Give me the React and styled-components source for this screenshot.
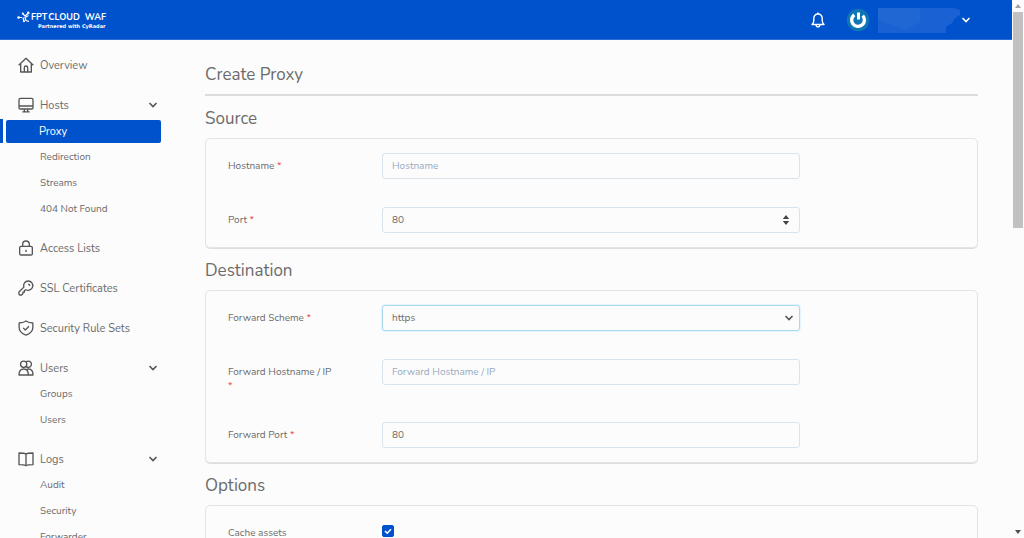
import React, { useState } from 'react'
import styled, { createGlobalStyle } from 'styled-components'

const menu = [
  { label: 'Overview', icon: 'home' },
  { label: 'Hosts', icon: 'monitor', children: ['Proxy', 'Redirection', 'Streams', '404 Not Found'] },
  { label: 'Access Lists', icon: 'lock' },
  { label: 'SSL Certificates', icon: 'key' },
  { label: 'Security Rule Sets', icon: 'shield' },
  { label: 'Users', icon: 'users', children: ['Groups', 'Users'] },
  { label: 'Logs', icon: 'book', children: ['Audit', 'Security', 'Forwarder'] },
]

const icons = {
  home: (
    <>
      <path d="M1 12.500 12 2l11 10.500" />
      <path d="M4 10v12.500h16V10" />
      <path d="M9.500 22.500V16a2.500 2.500 0 0 1 5 0v6.500" />
    </>
  ),
  monitor: (
    <>
      <rect x="1.500" y="2" width="21" height="16" rx="2" />
      <path d="M1.500 13.500h21M9.500 18v4M14.500 18v4M6.500 22.300h11" />
    </>
  ),
  lock: (
    <>
      <rect x="2.500" y="9.500" width="19" height="13" rx="2" />
      <path d="M7 9.500V6.500a5 5 0 0 1 10 0v3M12 14.500v3.500" />
    </>
  ),
  key: (
    <>
      <path d="M15.500 1.500a7 7 0 0 0-6.700 9.200L1.800 17.700a1.500 1.500 0 0 0-.4 1V21a1.500 1.500 0 0 0 1.500 1.500h2.400l2-2v-2.300h2.300v-2.300l2.200-1.300a7 7 0 1 0 3.700-13.100z" />
      <path d="M15.200 6.200c1.500.2 2.500 1.200 2.700 2.700" />
    </>
  ),
  shield: (
    <>
      <path d="M12 1.500c3 2 6.500 3 10.300 3v6.500c0 5.500-4 9.500-10.300 11.800C5.700 20.500 1.700 16.500 1.700 11V4.500C5.500 4.500 9 3.500 12 1.500z" />
      <path d="m7.800 11.800 3.200 3.200 5.500-5.500" />
    </>
  ),
  users: (
    <>
      <circle cx="8.500" cy="6.500" r="4.700" />
      <path d="M12 3.300a4.700 4.700 0 1 1 0 6.400" />
      <path d="M1.500 22.500c0-6 2.500-9 7-9s7 3 7 9z" />
      <path d="M12.500 14.600c1-.7 2-1.100 3.300-1.100 4.400 0 6.700 3 6.700 9h-7" />
    </>
  ),
  book: (
    <>
      <path d="M12 4.500C10.500 3.300 8 3 1.500 3v17.500c6.500 0 9 .3 10.500 1.500 1.500-1.200 4-1.500 10.500-1.500V3C16 3 13.500 3.300 12 4.500z" />
      <path d="M12 4.500V22" />
    </>
  ),
}

const MenuIcon = ({ name }) => (
  <svg width="16" height="16" viewBox="0 0 24 24" fill="none" stroke="#555" strokeWidth="2" strokeLinejoin="round" aria-hidden="true">
    {icons[name]}
  </svg>
)

const Chevron = ({ color = '#555' }) => (
  <svg width="10" height="10" viewBox="0 0 10 10" fill="none" stroke={color} strokeWidth="1.600" aria-hidden="true">
    <path d="M1.500 3 5 6.500 8.500 3" />
  </svg>
)

const Header = () => (
  <TopBar>
    <Logo href="#">
      <svg width="14" height="12" viewBox="0 0 14 12" fill="#fff" aria-hidden="true">
        <path d="M1.500 6.500H5M6 3 8 5l3.500-3M11.500 4.500 8 6.500 9 9.500l3 1M6 6.500l1 4" fill="none" stroke="#fff" strokeWidth="1.200" />
        <circle cx="1.600" cy="6.500" r="1.300" />
        <circle cx="5.800" cy="2.600" r="1" />
        <circle cx="11.300" cy="1.900" r="1.300" />
        <circle cx="7" cy="10.300" r="1" />
      </svg>
      <LogoText>
        <LogoName>
          <LogoBrand>
            <span>FPT</span> <span>CLOUD</span>
          </LogoBrand>
          <span>WAF</span>
        </LogoName>
        <LogoNote>Partnered with CyRadar</LogoNote>
      </LogoText>
    </Logo>
    <Account>
      <BellButton type="button" aria-label="Notifications">
        <svg width="14" height="16" viewBox="0 0 14 16" fill="none" stroke="#fff" strokeWidth="1.400" strokeLinejoin="round">
          <path d="M1 12.500h12c-1.300-1.200-1.800-2.300-1.800-4V6.300C11.200 3.700 9.500 2 7 2S2.800 3.700 2.800 6.300v2.200c0 1.700-.5 2.800-1.800 4z" />
          <path d="M5 13c.2 1.300 1 2 2 2s1.800-.7 2-2M7 .5V2" />
        </svg>
      </BellButton>
      <UserButton type="button" aria-label="Account menu">
        <svg width="24" height="24" viewBox="0 0 24 24" fill="none" aria-hidden="true">
          <circle cx="12" cy="12" r="11.300" fill="#0f75b5" />
          <path d="M8.300 6.800a6.400 6.400 0 1 0 8.400.8" stroke="#fff" strokeWidth="3.400" />
          <path d="M12.500 4.500v7" stroke="#fff" strokeWidth="3" />
        </svg>
        <svg width="83" height="26" viewBox="0 0 83 26" aria-hidden="true">
          <path d="M0 1h76l6 2v5l-5 3-3 5-6 4v6H0z" fill="#1a62d3" />
          <path d="M0 1h42v14l-14 8L0 13z" fill="#2067d4" />
        </svg>
        <Chevron color="#fff" />
      </UserButton>
    </Account>
  </TopBar>
)

const Sidebar = () => {
  const [active, setActive] = useState('Proxy')
  return (
    <SideNav>
      {menu.map(item => (
        <MenuGroup key={item.label}>
          <MenuLink href="#">
            <MenuIcon name={item.icon} />
            <span>{item.label}</span>
            {item.children && <Chevron />}
          </MenuLink>
          {item.children && (
            <SubMenu>
              {item.children.map(child => (
                <li key={child}>
                  <SubLink href="#" $active={child === active} onClick={() => setActive(child)}>
                    <span>{child}</span>
                  </SubLink>
                </li>
              ))}
            </SubMenu>
          )}
        </MenuGroup>
      ))}
    </SideNav>
  )
}

const Field = ({ id, label, required, children }) => (
  <FieldRow>
    <Label htmlFor={id}>
      {label} {required && <Star>*</Star>}
    </Label>
    <Control>{children}</Control>
  </FieldRow>
)

const ProxyForm = () => (
  <Main>
    <PageTitle>Create Proxy</PageTitle>
    <form>
      <SectionTitle>Source</SectionTitle>
      <Card>
        <Field id="hostname" label="Hostname" required>
          <Input id="hostname" type="text" placeholder="Hostname" />
        </Field>
        <Field id="port" label="Port" required>
          <Input id="port" type="number" defaultValue="80" />
          <FieldMark $right="10px">
            <svg width="8" height="10" viewBox="0 0 8 10" fill="#444" aria-hidden="true">
              <path d="M4 0 7.200 4H.8zM4 10 .8 6h6.400z" />
            </svg>
          </FieldMark>
        </Field>
      </Card>
      <SectionTitle>Destination</SectionTitle>
      <Card>
        <Field id="scheme" label="Forward Scheme" required>
          <Select id="scheme" defaultValue="https" autoFocus>
            <option>http</option>
            <option>https</option>
          </Select>
          <FieldMark $right="6px"><Chevron /></FieldMark>
        </Field>
        <Field id="forwardHost" label="Forward Hostname / IP" required>
          <Input id="forwardHost" type="text" placeholder="Forward Hostname / IP" />
        </Field>
        <Field id="forwardPort" label="Forward Port" required>
          <Input id="forwardPort" type="number" defaultValue="80" />
        </Field>
      </Card>
      <SectionTitle>Options</SectionTitle>
      <Card>
        <Field id="cache" label="Cache assets">
          <Checkbox>
            <input id="cache" type="checkbox" defaultChecked />
            <svg width="12" height="12" viewBox="0 0 12 12" fill="none" stroke="#fff" strokeWidth="1.600" aria-hidden="true">
              <path d="m3 6 2.200 2.200L9 4.200" />
            </svg>
          </Checkbox>
        </Field>
      </Card>
    </form>
  </Main>
)

const App = () => (
  <>
    <GlobalStyle />
    <Screen>
      <Page>
        <Header />
        <Content>
          <Sidebar />
          <ProxyForm />
        </Content>
      </Page>
      <ScrollTrack aria-hidden="true">
        <svg width="6" height="4" viewBox="0 0 6 4" fill="#a3a3a3"><path d="M3 0 6 4H0z" /></svg>
        <ScrollArea><ScrollThumb /></ScrollArea>
        <svg width="6" height="4" viewBox="0 0 6 4" fill="#505050"><path d="M3 4 0 0h6z" /></svg>
      </ScrollTrack>
    </Screen>
  </>
)

const GlobalStyle = createGlobalStyle`
  *, *::before, *::after {
    box-sizing: border-box;
  }
  body {
    margin: 0;
    background: #fcfcfc;
    color: #6b6b6b;
    font-family: Nunito, Lato, sans-serif;
    font-size: 10px;
  }
  a {
    color: inherit;
    text-decoration: none;
  }
  button, input, select {
    font: inherit;
    color: inherit;
  }
  svg {
    display: block;
    flex: none;
  }
`
const Screen = styled.div`
  display: flex;
  height: 100vh;
  overflow: hidden;
`
const Page = styled.div`
  flex: 1;
  min-width: 0;
`
const TopBar = styled.header`
  display: flex;
  align-items: center;
  justify-content: space-between;
  height: 40px;
  padding: 0 41px 0 17px;
  background: #0052cc;
  border-bottom: 1px solid #2a6cd4;
`
const Logo = styled.a`
  display: flex;
  align-items: flex-start;
  color: #fff;
`
const LogoText = styled.span`
  display: flex;
  flex-direction: column;
`
const LogoName = styled.span`
  display: flex;
  gap: 5px;
  font-size: 9px;
  line-height: 12px;
  font-weight: 700;
`
const LogoBrand = styled.span`
  display: flex;
  gap: 1px;
`
const LogoNote = styled.span`
  padding-left: 7px;
  font-family: "DejaVu Sans", sans-serif;
  font-size: 5px;
  line-height: 6px;
  font-weight: 700;
`
const Account = styled.div`
  display: flex;
  align-items: center;
  gap: 21px;
`
const BellButton = styled.button`
  padding: 0;
  border: 0;
  background: none;
`
const UserButton = styled.button`
  display: flex;
  align-items: center;
  padding: 0;
  border: 0;
  background: none;

  svg + svg {
    margin-left: 8px;
  }
  svg:last-child {
    margin-left: 0;
  }
`
const Content = styled.div`
  display: flex;
  align-items: flex-start;
`
const SideNav = styled.nav`
  flex: none;
  display: flex;
  flex-direction: column;
  gap: 14px;
  width: 171px;
  padding-top: 12px;
`
const MenuGroup = styled.div`
  padding-right: 10px;
`
const MenuLink = styled.a`
  display: flex;
  align-items: center;
  gap: 6px;
  height: 26px;
  padding: 0 3px 0 18px;
  font-size: 11px;

  span {
    flex: 1;
  }
`
const SubMenu = styled.ul`
  margin: 0 0 -1px;
  padding: 0;
  list-style: none;
`
const SubLink = styled.a`
  display: flex;
  align-items: center;
  height: 26px;
  padding-left: 3px;
  border-left: 3px solid transparent;
  border-image: ${({ $active }) => ($active ? 'linear-gradient(transparent 2px, #0052cc 2px, #0052cc 24px, transparent 24px) 1' : 'none')};
  border-width: 0 0 0 3px;
  color: ${({ $active }) => ($active ? '#fff' : 'inherit')};
  font-size: ${({ $active }) => ($active ? '11px' : '10px')};

  span {
    flex: 1;
    padding-left: ${({ $active }) => ($active ? '33px' : '34px')};
    line-height: 23px;
    border-radius: 2px;
    background: ${({ $active }) => ($active ? '#0052cc' : 'none')};
  }
`
const Main = styled.main`
  flex: 1;
  min-width: 0;
  padding: 22px 34px 22px;
`
const PageTitle = styled.h1`
  margin: 0 0 10px;
  padding-bottom: 6px;
  border-bottom: 2px solid #dcdcdc;
  font-size: 17px;
  line-height: 26px;
  font-weight: 400;
`
const SectionTitle = styled.h2`
  margin: 0 0 6px;
  font-size: 17px;
  line-height: 26px;
  font-weight: 400;
`
const Card = styled.section`
  display: flex;
  flex-direction: column;
  gap: 28px;
  margin-bottom: 10px;
  padding: 14px 22px;
  border: 1px solid #e4e4e4;
  border-radius: 5px;
  box-shadow: 0 1px 0 #dedede;
`
const FieldRow = styled.div`
  display: grid;
  grid-template-columns: 154px minmax(0, 1fr) 155px;
  align-items: start;
`
const Label = styled.label`
  padding: 6px 44px 1px 0;
  line-height: 14px;
`
const Star = styled.span`
  color: #f0443a;
`
const Control = styled.div`
  position: relative;
`
const Input = styled.input`
  display: block;
  width: 100%;
  height: 26px;
  padding: 0 9px;
  border: 1px solid #dae3ea;
  border-radius: 3px;
  background: #fcfcfc;
  outline: none;
  appearance: textfield;

  &::placeholder {
    color: #9aa9bd;
    opacity: 1;
  }
  &::-webkit-inner-spin-button {
    appearance: none;
  }
  &:focus {
    border-color: #a6daf5;
    box-shadow: 0 0 0 1px #e2f4fd;
  }
`
const Select = styled(Input).attrs({ as: 'select' })`
  appearance: none;
`
const FieldMark = styled.span`
  position: absolute;
  top: 8px;
  right: ${({ $right }) => $right};
  pointer-events: none;
`
const Checkbox = styled.span`
  position: relative;
  display: block;
  width: 12px;
  margin-top: 5px;

  input {
    display: block;
    width: 12px;
    height: 12px;
    margin: 0;
    border: 1px solid #0052cc;
    border-radius: 2px;
    appearance: none;
  }
  input:checked {
    background: #0052cc;
  }
  svg {
    position: absolute;
    inset: 0;
    pointer-events: none;
  }
`
const ScrollTrack = styled.div`
  display: flex;
  flex-direction: column;
  align-items: center;
  width: 12px;
  padding: 4px 0;
`
const ScrollArea = styled.div`
  flex: 1;
  width: 10px;
  padding: 4px 0;
`
const ScrollThumb = styled.div`
  height: 42%;
  background: #c1c1c1;
`

export default App
